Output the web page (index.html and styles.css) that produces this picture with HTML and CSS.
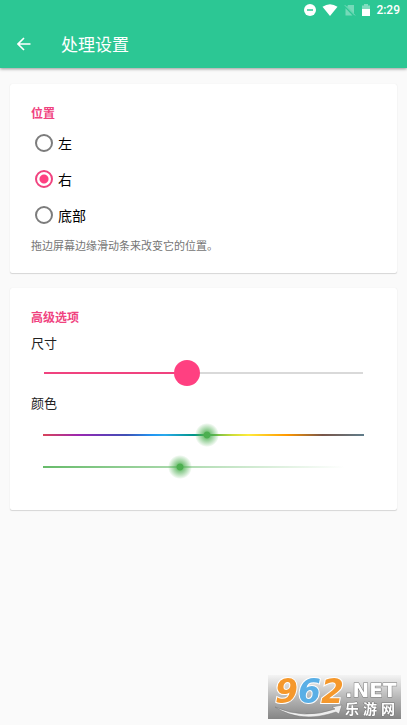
FILE: index.html
```html
<!DOCTYPE html>
<html lang="zh-CN">
<head>
<meta charset="utf-8">
<meta name="viewport" content="width=device-width, initial-scale=1">
<title>处理设置</title>
<link rel="stylesheet" href="styles.css">
</head>
<body>
<header class="header">
  <div class="status">
    <svg width="12" height="12" viewBox="0 0 12 12" aria-hidden="true"><circle cx="6" cy="6" r="6" fill="#fff"/><path d="M3 6h6" stroke="#2cc794" stroke-width="1.5"/></svg>
    <svg width="16" height="12" viewBox="0 0 16 12" aria-hidden="true"><path d="M8 12L.5 2.8Q8-2.4 15.500 2.800Z" fill="#fff"/></svg>
    <svg width="12" height="12" viewBox="0 0 12 12" aria-hidden="true"><path d="M4 1h6v8.500L3.200 2.700ZM1.500 4.200L8.500 11.500h-7Z" fill="#fff" opacity=".35"/><path d="M.8 1.200L11 11.400" stroke="#fff" opacity=".4"/></svg>
    <svg width="8" height="12" viewBox="0 0 8 12" aria-hidden="true"><path d="M0 1.500h2V0h4v1.500h2V5H0Z" fill="#fff" opacity=".4"/><path d="M0 5h8v7H0Z" fill="#fff"/></svg>
    <time class="clock">2:29</time>
  </div>
  <div class="toolbar">
    <button class="back" type="button" aria-label="返回">
      <svg width="14" height="14" viewBox="0 0 14 14" aria-hidden="true"><path d="M13.500 7H1.500M7 1L1 7l6 6" fill="none" stroke="#fff" stroke-width="1.600"/></svg>
    </button>
    <h1 class="title">处理设置</h1>
  </div>
</header>
<main class="content">
  <section class="card">
    <h2 class="section-title" id="position">位置</h2>
    <div role="radiogroup" aria-labelledby="position">
      <label class="option"><input type="radio" name="side"><span>左</span></label>
      <label class="option"><input type="radio" name="side" checked><span>右</span></label>
      <label class="option"><input type="radio" name="side"><span>底部</span></label>
    </div>
    <p class="hint">拖边屏幕边缘滑动条来改变它的位置。</p>
  </section>
  <section class="card card-advanced">
    <h2 class="section-title">高级选项</h2>
    <label class="label" for="size">尺寸</label>
    <input class="slider size" id="size" type="range" min="0" max="1000" value="448">
    <label class="label" for="color">颜色</label>
    <div class="color-sliders">
      <input class="slider glow hue" id="color" type="range" min="0" max="1000" value="511">
      <input class="slider glow alpha" type="range" min="0" max="1000" value="427" aria-label="透明度">
    </div>
  </section>
</main>
<div class="watermark">
  <svg width="133" height="44" viewBox="0 0 133 44" role="img" aria-label="962.NET 乐游网">
    <defs><linearGradient id="shade" x1="0" y1="0" x2="0" y2="1"><stop offset="0" stop-color="#f4f4f4"/><stop offset=".5" stop-color="#b8b8b8"/><stop offset="1" stop-color="#858585"/></linearGradient></defs>
    <path d="M0 0h133v44H0z" fill="url(#shade)"/>
    <path d="M7 32q29 13 60 2l-3-2 10-2-3 9-3-2Q33 49 7 32Z" fill="#eee" stroke="#777" stroke-width=".5"/>
    <text class="mark-number" x="7" y="28"><tspan class="orange">9</tspan><tspan class="blue">6</tspan><tspan class="orange">2</tspan></text>
    <text class="mark-text mark-net" x="77" y="22">.NET</text>
    <text class="mark-text mark-name" y="39"><tspan x="77">乐</tspan><tspan x="95">游</tspan><tspan x="113">网</tspan></text>
  </svg>
</div>
</body>
</html>
```
FILE: styles.css
```css
* {
  box-sizing: border-box;
}

body {
  margin: 0;
  background: #fafafa;
  color: #212121;
  font-family: "Noto Sans CJK SC", sans-serif;
}

.header {
  background: #2cc794;
  color: #fff;
  box-shadow: 0 1px 3px rgba(0, 0, 0, 0.4);
}

.status {
  display: flex;
  align-items: center;
  justify-content: flex-end;
  gap: 6px;
  height: 20px;
  padding-right: 7px;
}

.clock {
  font: 500 12px/20px Roboto, sans-serif;
}

.toolbar {
  display: flex;
  align-items: center;
  gap: 13px;
  height: 48px;
}

.back {
  display: grid;
  place-items: center;
  width: 48px;
  height: 48px;
  padding: 0;
  border: 0;
  background: none;
}

.title {
  margin: 0;
  font-size: 17px;
  font-weight: 400;
  line-height: 24px;
}

.content {
  display: grid;
  gap: 15px;
  padding: 16px 10px;
}

.card {
  padding: 20px 21px 16px;
  border-radius: 2px;
  background: #fff;
  box-shadow: 0 1px 1px rgba(0, 0, 0, 0.14), 0 0 1px rgba(0, 0, 0, 0.1);
}

.card-advanced {
  padding-bottom: 27px;
}

.section-title {
  margin: 0 0 3px;
  color: #f0437f;
  font-size: 12px;
  font-weight: 700;
  line-height: 18px;
}

.option {
  display: flex;
  align-items: center;
  gap: 5px;
  height: 36px;
  padding-left: 4px;
  color: #000;
  font-size: 14px;
  line-height: 18px;
}

.option input {
  appearance: none;
  width: 18px;
  height: 18px;
  margin: 0;
  border: 2px solid #7c7c7c;
  border-radius: 50%;
}

.option input:checked {
  border-color: #f0437f;
  background: radial-gradient(circle, #ff4081 4px, transparent 5px);
}

.hint {
  margin: 0;
  color: #757575;
  font-size: 11px;
  line-height: 24px;
}

.label {
  display: block;
  font-size: 13px;
  line-height: 28px;
}

.color-sliders {
  padding-top: 2px;
}

.slider {
  appearance: none;
  display: block;
  width: 100%;
  height: 32px;
  margin: 0;
  background-color: transparent;
  background-position: center;
  background-repeat: no-repeat;
}

.slider::-webkit-slider-thumb {
  appearance: none;
  border-radius: 50%;
}

.size {
  background-image: linear-gradient(to right, #f0437f 44.8%, #d9d9d9 44.8%);
  background-size: calc(100% - 26px) 2px;
}

.size::-webkit-slider-thumb {
  width: 26px;
  height: 26px;
  background: #ff4081;
}

.glow {
  background-size: calc(100% - 24px) 2px;
}

.glow::-webkit-slider-thumb {
  width: 24px;
  height: 24px;
  background: radial-gradient(circle, #4caf50 3px, rgba(76, 175, 80, 0.7) 4px, rgba(76, 175, 80, 0.1) 11px, transparent 12px);
}

.hue {
  background-image: linear-gradient(to right, #d9445a, #9c27b0 11%, #673ab7 19%, #3f51b5 26%, #2196f3 34%, #29a9ec 38%, #009688 47%, #4caf50 52%, #cddc39 59%, #ffeb3b 64%, #ff9800 76%, #795548 87%, #607d8b);
}

.alpha {
  background-image: linear-gradient(to right, rgba(76, 175, 80, 0.85), rgba(76, 175, 80, 0) 94%);
}

.watermark {
  position: fixed;
  right: 6px;
  bottom: 6px;
}

.watermark svg {
  display: block;
}

.mark-number {
  font: italic 700 33px "DejaVu Sans", sans-serif;
  stroke: #fff;
  stroke-width: 2px;
  paint-order: stroke;
}

.orange {
  fill: #f5982c;
}

.blue {
  fill: #5aafe6;
}

.mark-text {
  fill: #fff;
  stroke: #777;
  stroke-width: 1px;
  paint-order: stroke;
}

.mark-net {
  font: 700 20px "DejaVu Sans", sans-serif;
}

.mark-name {
  font-size: 14px;
  font-weight: 700;
}
```
